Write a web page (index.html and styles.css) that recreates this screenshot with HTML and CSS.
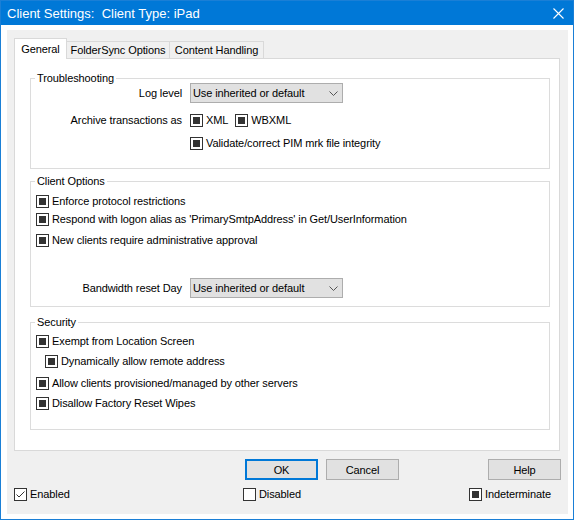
FILE: index.html
```html
<!DOCTYPE html>
<html lang="en">
<head>
  <meta charset="UTF-8" />
  <meta name="viewport" content="width=device-width, initial-scale=1.0" />
  <title>Client Settings: Client Type: iPad</title>
  <link rel="stylesheet" href="styles.css">
</head>
<body>
  <div class="window">
    <div class="titlebar">
      <span class="title">Client Settings:  Client Type: iPad</span>
      <svg class="close" width="11" height="11" viewBox="0 0 11 11"><path d="M0.5 0.5L10.5 10.5M10.5 0.5L0.5 10.5" stroke="#fff" stroke-width="1.1" fill="none"/></svg>
    </div>
    <div class="frame">
      <div class="client">
        <div class="tabs">
          <div class="tab active">General</div>
          <div class="tab sync">FolderSync Options</div>
          <div class="tab content">Content Handling</div>
        </div>
        <div class="panel">
          <div class="group trouble">
            <div class="group-title">Troubleshooting</div>
            <div class="form-grid">
              <div class="label">Log level</div>
              <div class="select">Use inherited or default<svg width="9" height="5" viewBox="0 0 9 5"><path d="M0.5 0.5L4.5 4.5L8.5 0.5" stroke="#555" fill="none"/></svg></div>
              <div class="label">Archive transactions as</div>
              <div class="inline">
                <div class="check"><span class="box mixed"></span>XML</div>
                <div class="check"><span class="box mixed"></span>WBXML</div>
              </div>
              <div></div>
              <div class="check"><span class="box mixed"></span>Validate/correct PIM mrk file integrity</div>
            </div>
          </div>

          <div class="group options">
            <div class="group-title">Client Options</div>
            <div class="check">
              <span class="box mixed"></span>Enforce protocol restrictions
            </div>
            <div class="check">
              <span class="box mixed"></span>Respond with logon alias as 'PrimarySmtpAddress' in Get/UserInformation
            </div>
            <div class="check approval">
              <span class="box mixed"></span>New clients require administrative approval
            </div>
            <div class="form-grid bandwidth">
              <div class="label">Bandwidth reset Day</div>
              <div class="select">Use inherited or default<svg width="9" height="5" viewBox="0 0 9 5"><path d="M0.5 0.5L4.5 4.5L8.5 0.5" stroke="#555" fill="none"/></svg></div>
            </div>
          </div>

          <div class="group security">
            <div class="group-title">Security</div>
            <div class="check tall">
              <span class="box mixed"></span>Exempt from Location Screen
            </div>
            <div class="check tall sub">
              <span class="box mixed"></span>Dynamically allow remote address
            </div>
            <div class="check tall spaced">
              <span class="box mixed"></span>Allow clients provisioned/managed by other servers
            </div>
            <div class="check tall">
              <span class="box mixed"></span>Disallow Factory Reset Wipes
            </div>
          </div>
        </div>

        <div class="buttons">
          <div class="btn default">OK</div>
          <div class="btn">Cancel</div>
          <div class="btn help">Help</div>
        </div>

        <div class="states">
          <div class="check">
            <span class="box"><svg width="11" height="11" viewBox="0 0 11 11"><path d="M1.5 5.5L4 8L9.5 2.5" stroke="#333" fill="none"/></svg></span>Enabled
          </div>
          <div class="check">
            <span class="box"></span>Disabled
          </div>
          <div class="check">
            <span class="box mixed"></span>Indeterminate
          </div>
        </div>
      </div>
    </div>
  </div>
</body>
</html>
```

FILE: styles.css
```css
body {
  margin: 0;
  background: #fff;
  font-family: "Liberation Sans", Arial, sans-serif;
  font-size: 11px;
  letter-spacing: -0.1px;
  color: #000;
}
.window {
  width: 574px;
  height: 520px;
  box-sizing: border-box;
  border: 1px solid #1a7fd6;
  background: #fff;
}
.titlebar {
  height: 24px;
  background: #0078d7;
  color: #fff;
  display: flex;
  align-items: center;
  justify-content: space-between;
  padding: 0 9px 0 6px;
}
.title {
  font-size: 13px;
  letter-spacing: 0;
  white-space: pre;
}
.frame {
  padding: 5px 5px 5px 6px;
}
.client {
  height: 484px;
  box-sizing: border-box;
  background: #f0f0f0;
  padding: 8px 7px 0 7px;
}
.tabs {
  display: flex;
  align-items: flex-end;
  height: 21px;
  margin-bottom: -1px;
}
.tab {
  box-sizing: border-box;
  height: 17px;
  margin-bottom: 1px;
  margin-left: -1px;
  border: 1px solid #d9d9d9;
  border-bottom: none;
  background: #f0f0f0;
  display: flex;
  align-items: center;
  justify-content: center;
}
.tab.active {
  position: relative;
  z-index: 1;
  height: 21px;
  margin: 0;
  width: 53px;
  background: #fff;
  padding-bottom: 1px;
}
.tab.sync {
  width: 104px;
}
.tab.content {
  width: 95px;
}
.panel {
  background: #fff;
  border: 1px solid #d9d9d9;
  margin-right: 1px;
  padding: 19px 9px 20px 15px;
}
.group {
  border: 1px solid #dcdcdc;
  padding: 0 5px;
}
.group-title {
  display: table;
  margin: -7px 0 -1px -1px;
  padding: 0 2px;
  line-height: 12px;
  background: #fff;
}
.trouble {
  padding-bottom: 15px;
}
.options {
  margin-top: 12px;
  padding-bottom: 8px;
}
.options .group-title {
  margin-bottom: 5px;
}
.security {
  margin-top: 15px;
  padding-bottom: 16px;
}
.security .group-title {
  margin-bottom: 3px;
}
.form-grid {
  display: grid;
  grid-template-columns: 146px auto;
  grid-template-rows: 20px 27px 23px;
  column-gap: 8px;
  align-items: end;
}
.form-grid.bandwidth {
  grid-template-rows: 20px;
  margin-top: 29px;
}
.label {
  height: 20px;
  line-height: 20px;
  text-align: right;
}
.select {
  width: 153px;
  height: 20px;
  box-sizing: border-box;
  border: 1px solid #adadad;
  background: #e1e1e1;
  display: flex;
  align-items: center;
  justify-content: space-between;
  padding: 0 4px 0 2px;
}
.inline {
  display: flex;
  gap: 7px;
}
.check {
  display: flex;
  align-items: center;
  gap: 3px;
  height: 18px;
}
.form-grid .check {
  height: 20px;
}
.check.approval {
  margin-top: 3px;
}
.check.tall {
  height: 20px;
}
.check.sub {
  margin-left: 9px;
}
.check.spaced {
  margin-top: 2px;
}
.box {
  flex: none;
  width: 13px;
  height: 13px;
  box-sizing: border-box;
  border: 1px solid #333;
  background: #fff;
  display: flex;
  align-items: center;
  justify-content: center;
}
.box.mixed::after {
  content: "";
  width: 7px;
  height: 7px;
  background: #333;
}
.buttons {
  display: flex;
  gap: 8px;
  margin-top: 8px;
  padding-left: 231px;
}
.btn {
  width: 73px;
  height: 21px;
  box-sizing: border-box;
  border: 1px solid #adadad;
  background: #e1e1e1;
  display: flex;
  align-items: center;
  justify-content: center;
}
.btn.default {
  border: 2px solid #0078d7;
}
.btn.help {
  margin-left: auto;
}
.states {
  display: grid;
  grid-template-columns: 229px 226px auto;
  margin-top: 6px;
}
.states .check {
  height: 16px;
}
```
